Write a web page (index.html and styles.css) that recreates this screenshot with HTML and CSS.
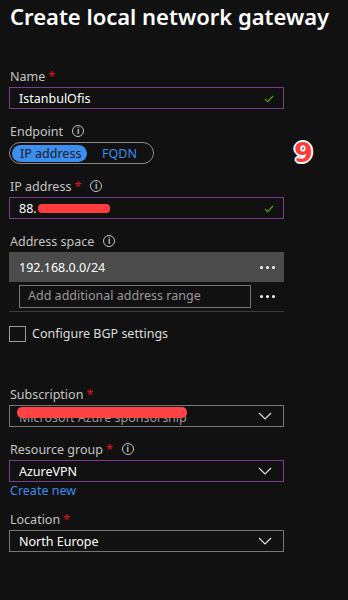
FILE: index.html
```html
<!DOCTYPE html>
<html lang="en">
<head>
    <meta charset="UTF-8">
    <meta name="viewport" content="width=device-width, initial-scale=1.0">
    <title>Create local network gateway</title>
    <link rel="stylesheet" href="styles.css">
</head>
<body>
    <div class="page">
        <h1>Create local network gateway</h1>

        <div class="field">
            <label>Name <span class="req">*</span></label>
            <div class="input active">
                <span class="value">IstanbulOfis</span>
                <svg class="check" width="10" height="8" viewBox="0 0 10 8"><polyline points="1,4 3.6,6.6 9,1" fill="none" stroke="#57a300" stroke-width="1.2"/></svg>
            </div>
        </div>

        <div class="field">
            <label>Endpoint <span class="info">i</span></label>
            <div class="toggle-row">
                <div class="toggle">
                    <span class="opt selected">IP address</span>
                    <span class="opt">FQDN</span>
                </div>
                <span class="badge">9</span>
            </div>
        </div>

        <div class="field">
            <label>IP address <span class="req">*</span> <span class="info">i</span></label>
            <div class="input active">
                <span class="value">88.<span class="redact"></span></span>
                <svg class="check" width="10" height="8" viewBox="0 0 10 8"><polyline points="1,4 3.6,6.6 9,1" fill="none" stroke="#57a300" stroke-width="1.2"/></svg>
            </div>
        </div>

        <div class="field">
            <label>Address space <span class="info">i</span></label>
            <div class="range-row filled">
                <span class="value">192.168.0.0/24</span>
                <span class="dots"><i></i><i></i><i></i></span>
            </div>
            <div class="range-row">
                <div class="range-input">Add additional address range</div>
                <span class="dots"><i></i><i></i><i></i></span>
            </div>
            <div class="divider"></div>
        </div>

        <div class="checkbox-row">
            <span class="box"></span>
            <span>Configure BGP settings</span>
        </div>

        <div class="field sub">
            <label>Subscription <span class="req">*</span></label>
            <div class="input select">
                <span class="value masked">Microsoft Azure sponsorship<span class="redact-over"></span></span>
                <svg class="chev" width="14" height="8" viewBox="0 0 14 8"><polyline points="1,1 7,7 13,1" fill="none" stroke="#e0e0e0" stroke-width="1.2"/></svg>
            </div>
        </div>

        <div class="field tight">
            <label>Resource group <span class="req">*</span> <span class="info">i</span></label>
            <div class="input select active">
                <span class="value">AzureVPN</span>
                <svg class="chev" width="14" height="8" viewBox="0 0 14 8"><polyline points="1,1 7,7 13,1" fill="none" stroke="#e0e0e0" stroke-width="1.2"/></svg>
            </div>
            <a class="link" href="#">Create new</a>
        </div>

        <div class="field">
            <label>Location <span class="req">*</span></label>
            <div class="input select">
                <span class="value">North Europe</span>
                <svg class="chev" width="14" height="8" viewBox="0 0 14 8"><polyline points="1,1 7,7 13,1" fill="none" stroke="#e0e0e0" stroke-width="1.2"/></svg>
            </div>
        </div>
    </div>
</body>
</html>
```

FILE: styles.css
```css
body {
    margin: 0;
    background-color: #111111;
    font-family: 'Noto Sans', 'Open Sans', sans-serif;
    font-size: 12.5px;
    color: #ffffff;
    height: 600px;
    overflow: hidden;
}

.page {
    width: 275px;
    padding-left: 9px;
}

h1 {
    margin: 0 0 36px 1px;
    font-size: 22px;
    font-weight: 600;
    line-height: 32px;
    white-space: nowrap;
    color: #ffffff;
}

.field {
    margin-bottom: 14px;
}

.field label {
    display: flex;
    align-items: center;
    gap: 4px;
    height: 16px;
    margin: 0 0 3px 1px;
    color: #c4c4c4;
    overflow: hidden;
}

.req {
    color: #e81123;
    margin-left: -1px;
}

.info {
    display: inline-flex;
    align-items: center;
    justify-content: center;
    width: 10px;
    height: 10px;
    border: 1px solid #c4c4c4;
    border-radius: 50%;
    font-size: 8px;
    font-weight: 700;
    line-height: 1;
    margin-left: 5px;
    color: #c4c4c4;
}

.input {
    position: relative;
    display: flex;
    align-items: center;
    justify-content: space-between;
    padding: 0 9px 0 9px;
    border: 1px solid #777777;
    box-sizing: border-box;
    height: 22px;
}

.input.active {
    border-color: #7a3c93;
}

.value {
    display: flex;
    align-items: center;
    color: #ffffff;
    white-space: nowrap;
}

.check {
    margin-top: 2px;
}

.redact {
    display: inline-block;
    width: 72px;
    height: 9px;
    margin-left: 1px;
    background-color: #ff3d3d;
    border-radius: 4px;
}

.masked {
    position: relative;
    color: #9a9a9a;
    padding-top: 3px;
}

.redact-over {
    position: absolute;
    left: -2px;
    top: 1px;
    width: 170px;
    height: 11px;
    background-color: #ff4242;
    border-radius: 5px;
}

.select .chev {
    margin-right: 2px;
}

.toggle-row {
    display: flex;
    align-items: center;
    height: 22px;
}

.toggle {
    display: flex;
    align-items: center;
    flex: none;
    width: 145px;
    height: 22px;
    box-sizing: border-box;
    padding: 0 2px;
    border: 1px solid #8a8a8a;
    border-radius: 11px;
}

.opt {
    height: 17px;
    line-height: 17px;
    padding: 0 8px;
    color: #3c8ef0;
    border-radius: 9px;
    white-space: nowrap;
}

.opt.selected {
    width: 75px;
    box-sizing: border-box;
    background-color: #3c8ef0;
    color: #1a1a1a;
    margin-right: 7px;
}

.badge {
    margin-left: 140px;
    line-height: 22px;
    font-family: 'DejaVu Sans', sans-serif;
    font-size: 27px;
    font-weight: 700;
    color: #ff3a3a;
    text-shadow: 1px 0 0 #fff, -1px 0 0 #fff, 0 1px 0 #fff, 0 -1px 0 #fff,
                 1px 1px 0 #fff, -1px -1px 0 #fff, 1px -1px 0 #fff, -1px 1px 0 #fff,
                 2px 0 0 #fff, -2px 0 0 #fff, 0 2px 0 #fff, 0 -2px 0 #fff;
}

.range-row {
    display: flex;
    align-items: center;
    justify-content: space-between;
    height: 30px;
    padding: 0 9px 0 10px;
}

.range-row.filled {
    background-color: #4b4b4b;
    margin-top: 1px;
}

.dots {
    display: flex;
    gap: 3px;
}

.dots i {
    width: 3px;
    height: 3px;
    border-radius: 50%;
    background-color: #ffffff;
}

.range-row + .range-row {
    height: 23px;
    margin-top: 3px;
    padding-left: 10px;
}

.range-input {
    width: 232px;
    height: 23px;
    box-sizing: border-box;
    border: 1px solid #777777;
    padding-left: 8px;
    line-height: 20px;
    color: #9a9a9a;
}

.divider {
    height: 1px;
    margin-top: 3px;
    background-color: #3c3c3c;
}

.checkbox-row {
    display: flex;
    align-items: center;
    gap: 6px;
    margin-top: -1px;
    color: #dcdcdc;
}

.checkbox-row .box {
    width: 17px;
    height: 16px;
    box-sizing: border-box;
    border: 1px solid #9a9a9a;
}

.field.sub {
    margin-top: 44px;
}

.field.tight {
    margin-bottom: 12px;
}

.link {
    display: block;
    margin: 1px 0 0 1px;
    color: #3c8ef0;
    text-decoration: none;
    line-height: 16px;
}
```
